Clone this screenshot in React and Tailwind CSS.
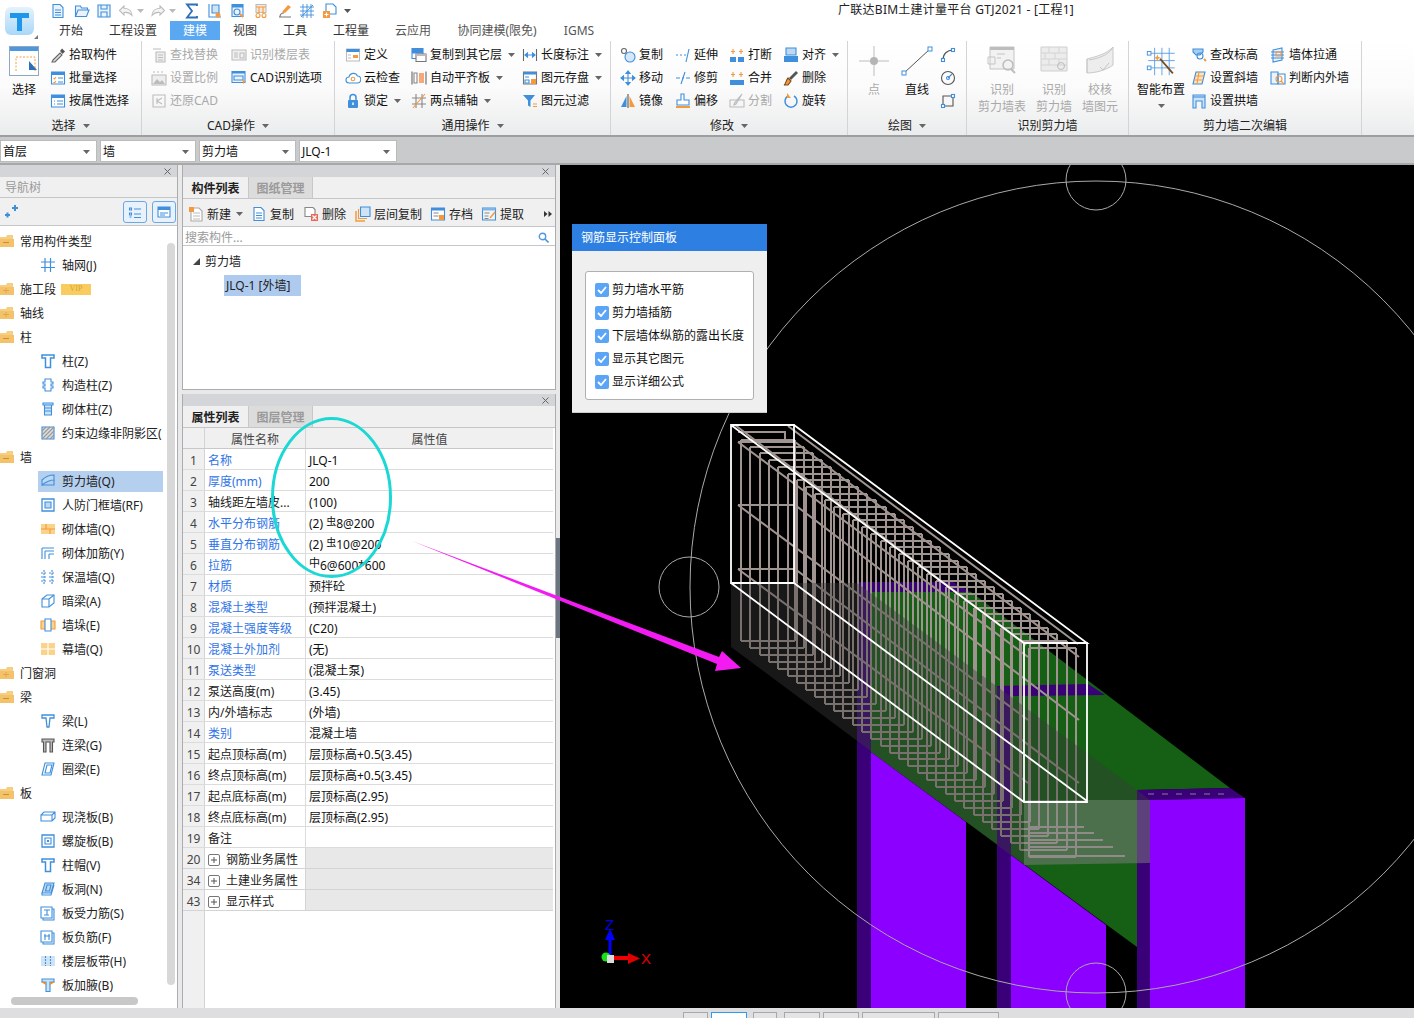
import React from "react";

const B = "#3f8fdc";
const O = "#f59a3c";
const G = "#bcbcbc";

function Svg({ s = 16, children }) {
  return (
    <svg width={s} height={s} viewBox="0 0 16 16" fill="none" className="shrink-0" strokeWidth="1.1">
      {children}
    </svg>
  );
}

const icons = {
  page: <><path d="M3 1.5h7l3 3v10H3z" fill="#eaf3fb" stroke={B} /><path d="M5 7h6M5 9.5h6M5 12h6" stroke={B} /></>,
  folder: <path d="M1.5 13.5V3h5l1 2h6v2M1.5 13.5L4 7h11l-2.5 6.5z" stroke={B} fill="#eaf3fb" />,
  save: <><path d="M2 2h12v12H2z" fill="#eaf3fb" stroke={B} /><path d="M5 2v4h6V2M5 14V9h6v5" stroke={B} /></>,
  undo: <path d="M6 3L1.5 7.5 6 12V9.5c3-.5 6 .5 8 3 0-4-3-7-8-7.2z" stroke={G} fill="#f4f4f4" />,
  redo: <path d="M10 3l4.500 4.500L10 12V9.500c-3-.5-6 .5-8 3 0-4 3-7 8-7.200z" stroke={G} fill="#f4f4f4" />,
  sigma: <path d="M13 3V1.500H3l5 6.500-5 6.500h10V13" stroke="#2d6fb8" strokeWidth="1.800" />,
  qa1: <><path d="M2 1v13h12" stroke={B} /><path d="M5 2h7v8H5z" fill="#cfe3f6" stroke={B} /><circle cx="11" cy="12" r="2.500" fill={O} /></>,
  qa2: <><path d="M2 1.500h11v12H2z" fill="#eaf3fb" stroke={B} /><path d="M2 1.500h11v3H2z" fill={B} /><circle cx="7" cy="9" r="3" stroke={B} /><path d="M10 11l3 3" stroke={O} strokeWidth="2" /></>,
  qa3: <><path d="M3 1.500h10v8H3z" fill="#f3e8de" stroke={G} /><path d="M3 4h10M6 4v6M10 4v6" stroke={O} /><circle cx="5" cy="12.500" r="2" stroke={O} /><circle cx="11" cy="12.500" r="2" stroke={O} /></>,
  qa4: <><path d="M11 2l3 2-6 6-3-1z" fill={O} /><path d="M2 14h12M3 14c0-3 2-4 4-4" stroke="#777" /></>,
  grid: <path d="M4 1v14M8 1v14M12 1v14M1 4h14M1 8h14M1 12h14M2 14L14 2" stroke={B} strokeWidth=".9" />,
  qa5: <><path d="M4 1h7l3 3v7H4z" fill="#fff" stroke={B} /><path d="M1 8h7v7H1z" fill={O} /><path d="M4.500 9.500v4M2.500 11.500h4" stroke="#fff" /></>,
  picker: <><path d="M3 13l7-7 2 2-7 7-3 0z" fill="#ddd" stroke="#666" /><path d="M10 4l2-2.500 3 3L12.500 7z" fill="#555" /></>,
  batch: <><path d="M1.500 2h13v12h-13z" fill="#fff" stroke={B} /><path d="M1.500 2h13v3h-13z" fill={B} /><path d="M3.500 8l1 1 1.500-2M3.500 12l1 1 1.500-2" stroke={O} /><path d="M8 8h5M8 12h5" stroke={B} /></>,
  prop: <><path d="M1.500 2h13v12h-13z" fill="#fff" stroke={B} /><path d="M1.500 2h13v3h-13z" fill={B} /><path d="M4 8h1M4 11h1M7 8h6M7 11h6" stroke={B} /></>,
  find: <><path d="M5 5h9v10H5z" fill="#eee" stroke={G} /><path d="M7 8h5M7 10.500h5M7 13h5M2 2h8" stroke={G} /></>,
  floor: <><path d="M1 3h14v10H1z" fill="#f1f1f1" stroke={G} /><path d="M3 6h4M3 8h4M3 10h4M9 6h4v5H9z" stroke={G} /></>,
  scale: <><path d="M1 5h14v10H1z" fill="#eee" stroke={G} /><path d="M2 14l4-5 3 3 2-2 3 4z" fill={G} /><path d="M2 2h12" stroke={G} strokeDasharray="2 2" /></>,
  restore: <><path d="M2 2h12v12H2z" stroke={G} /><path d="M11 5L6 8l5 3M6 5v6" stroke={G} /></>,
  cad: <><path d="M1 1.500h13v11H1z" fill="#eaf3fb" stroke={B} /><path d="M1 1.500h13v2H1z" fill={B} /><path d="M3 6h9v4H3z" stroke={B} /><path d="M11 9l4 3-2 .5-.5 2z" fill={O} /></>,
  define: <><path d="M1.500 2h13v12h-13z" fill="#fff" stroke={G} /><path d="M1.500 2h13v3h-13z" fill={B} /><path d="M8 8h5v3H8z" fill={O} /><path d="M3 8h3M3 11h3" stroke={G} /></>,
  cloud: <><path d="M4 13a3 3 0 010-6 4.500 4.500 0 018.500-1 3.500 3.500 0 01-.5 7z" fill="#fff" stroke={B} /><circle cx="8" cy="9" r="1.800" stroke={O} /></>,
  lock: <><path d="M5 7V4.500a3 3 0 016 0V7" stroke={B} strokeWidth="1.500" /><rect x="3" y="7" width="10" height="8" rx="1" fill={B} /><path d="M8 9.500v2.500" stroke="#fff" strokeWidth="1.500" /></>,
  copyL: <><path d="M1 1.500h11v5H1z" fill={B} /><path d="M1 1.500h11v10H1z" stroke={B} /><path d="M5 7h10v7.500H5z" fill="#fff" stroke="#777" /><path d="M5 7h10v2H5z" fill="#bbb" /></>,
  align: <><path d="M1 1.500v13M15 1.500v13" stroke="#666" /><path d="M3 3h3v10H3z" fill="#fff" stroke="#888" /><path d="M8 3h5v10H8z" fill="#f8a878" /></>,
  axis: <><path d="M5 1v14M11 1v14M1 5h14M1 11h14" stroke="#888" /><path d="M2 15L14 1" stroke={O} /></>,
  dim: <><path d="M1.500 2v12M14.500 2v12" stroke="#666" /><path d="M3 8h10M3 8l2.500-2v4zM13 8l-2.500-2v4z" stroke={B} fill={B} /></>,
  store: <><path d="M1.500 2h13v12h-13z" fill="#fff" stroke="#777" /><path d="M1.500 2h13v2.500h-13z" fill={B} /><path d="M3 7h4M3 10h4v3H3z" stroke={B} /><path d="M9 9h5v5H9z" fill={O} /></>,
  filter: <><path d="M1 2h12L8.500 7.500V14L6 12.500v-5z" fill={B} /><path d="M11 11h4M11 13.500h4" stroke={O} /></>,
  copy: <><circle cx="4" cy="4" r="2.500" stroke="#666" /><circle cx="10" cy="10" r="5" fill="#d6e8f8" stroke={B} /></>,
  extend: <path d="M1 8h2M5 8h2M9 8h2M14 2l-3 13" stroke={B} />,
  trim: <path d="M1 8h4M7 8h2M11 8h4M10 2L6 14" stroke={B} />,
  breakI: <><path d="M1 10h6v5H1zM9 10h6v5H9z" fill={B} /><path d="M4 2v5M2 4.500h4M12 2v5M10 4.500h4" stroke={O} /></>,
  merge: <><path d="M1 10h14v5H1z" fill={B} /><path d="M4 2v5M2 4.500h4M12 2v5M10 4.500h4" stroke={O} /></>,
  alignT: <><path d="M3 1h10v7H3z" fill="#bcd8f2" stroke={B} /><path d="M1 9h14v6H1z" fill={B} /></>,
  move: <path d="M8 1v14M1 8h14M8 1L6 3.500h4zM8 15l-2-2.500h4zM1 8l2.500-2v4zM15 8l-2.500-2v4z" stroke={B} fill={B} />,
  del: <><path d="M13 1L6 8l2 2 7-7z" fill="#555" /><path d="M5 8l3 3-3 4H1c2-1 2-5 4-7z" fill={O} stroke="#7a4a1a" /></>,
  mirror: <><path d="M8 1v14" stroke="#555" /><path d="M6.500 3v11H1z" fill={B} /><path d="M9.500 3v11H15z" fill={O} /></>,
  offset: <><path d="M6 1h3v6h5v5H2V7h4z" fill="#fff" stroke={B} /><path d="M1 14h14" stroke={O} strokeWidth="2" /></>,
  split: <><path d="M1 7h14v7H1z" stroke={G} /><path d="M13 1L7 11l-2 1 .5-2z" fill="#ddd" stroke={G} /></>,
  rotate: <><path d="M11 3a6 6 0 11-6 0" stroke={B} strokeWidth="1.500" /><path d="M4 0v5h4z" fill={O} /></>,
  arc: <><path d="M3 13C3 7 7 3 13 3" stroke="#555" /><rect x="1.500" y="11.500" width="3" height="3" fill="#fff" stroke={B} /><rect x="11.500" y="1.500" width="3" height="3" fill="#fff" stroke={B} /></>,
  circ: <><circle cx="8" cy="8" r="6.500" stroke="#555" /><circle cx="8" cy="8" r="1.500" stroke={B} /><path d="M8 8l4-4" stroke={B} /></>,
  rect: <><path d="M3 3h10v10H3z" stroke="#555" /><rect x="1.500" y="11.500" width="3" height="3" fill="#fff" stroke={B} /><rect x="11.500" y="1.500" width="3" height="3" fill="#fff" stroke={B} /></>,
  level: <><path d="M2 2h10v3L9 8H5L2 5z" fill="#a9cdf0" stroke={B} /><circle cx="9" cy="9" r="3" stroke={B} /><path d="M13 12l2 2" stroke={O} strokeWidth="2" /></>,
  slope: <><path d="M5 2h9l-3 12H2z" fill="#fbe4c6" stroke={B} /><path d="M4 6h9M3 10h9M8 2L6 14" stroke={O} /></>,
  archI: <><path d="M2 15V2h12v13h-3V8H5v7z" fill="#cfe3f6" stroke={B} /><path d="M2 4h12" stroke={B} /></>,
  pull: <><path d="M3 3l9-2v12l-9 2z" fill="#eaf3fb" stroke={B} /><path d="M1 5h13M1 8h13M1 11h13" stroke={B} /><path d="M6 5h5v4H6z" stroke={O} /></>,
  inout: <><path d="M1 2h7v12H1z" fill="#eaf3fb" stroke={B} /><path d="M8 4h7v10H8z" stroke={B} /><circle cx="9" cy="9" r="3" stroke={O} /><path d="M11 11l3 3" stroke={O} /></>,
  plusS: <path d="M2 11h5M4.500 8.500v5M9 4h6M12 1v6" stroke={B} strokeWidth="2" />,
  newP: <><path d="M3 2h8l3 3v10H3z" fill="#fff" stroke="#aaa" /><path d="M5 7h7M5 10h7M5 13h7" stroke="#bbb" /><path d="M1 1h5v5H1z" fill={O} /></>,
  copyP: <><path d="M3 1.500h7l3 3v10H3z" fill="#fff" stroke={B} /><path d="M5 7h6M5 9.500h6M5 12h6" stroke={B} /></>,
  delP: <><path d="M2 1.500h8l2 2v7H2z" fill="#fff" stroke="#888" /><path d="M8 8h7v7H8z" fill="#e96a5a" /><path d="M9.500 9.500l4 4M13.500 9.500l-4 4" stroke="#fff" /></>,
  layerC: <><path d="M1 5v10h9" stroke={O} strokeWidth="1.500" /><path d="M3.500 3v9.500H12" stroke={O} /><path d="M5.500 1h9.500v9.500H5.500z" fill="#cfe3f6" stroke={B} /></>,
  arch: <><path d="M1.500 2h13v12h-13z" fill="#fff" stroke={B} /><path d="M1.500 2h13v2.500h-13z" fill={B} /><path d="M3.500 7h5M3.500 10h5" stroke="#888" /><path d="M9 9h5v5H9z" fill={O} /></>,
  fetch: <><path d="M1.500 2h13v12h-13z" fill="#f4f4f4" stroke={B} /><path d="M1.500 2h13v2.500h-13z" fill="#7fb4e6" /><path d="M3.500 7h5M3.500 10h4M3.500 12.500h4" stroke="#888" /><path d="M14 6l-5 6" stroke={O} strokeWidth="1.500" /></>,
  gridT: <path d="M5 1v14M10.500 1v14M1 5h14M1 10.500h14" stroke={B} strokeWidth="1.200" />,
  colT: <path d="M2 2h12v3h-3.500v9.500h-5V5H2z" stroke={B} strokeWidth="1.500" />,
  colC: <path d="M5 2h6v3h2v2h-2v2h2v2h-2v3H5v-3H3V9h2V7H3V5h2z" stroke={B} />,
  colB: <><path d="M3 2h10v2H3zM4.500 4h7v10h-7z" fill="#cfe3f6" stroke={B} /><path d="M4.500 7h7M4.500 10h7" stroke={B} /></>,
  hatch: <><path d="M2 2h12v12H2z" fill="#ddd" stroke={B} /><path d="M2 6l4-4M2 10l8-8M2 14L14 2M6 14l8-8M10 14l4-4" stroke="#999" /></>,
  shear: <><path d="M2 12V7c4-4 8-5 12-5v5C10 7 6 9 2 12z" fill="#bcd8f2" stroke={B} /><path d="M2 12h12V7" stroke={B} /></>,
  frame: <><path d="M2 2h12v12H2z" stroke={B} strokeWidth="1.300" /><path d="M5 5h6v6H5z" fill="#bcd8f2" stroke={B} /></>,
  brick: <><path d="M1 3h14v10H1z" fill="#fbd28a" /><path d="M1 8h14M6 3v5M10 8v5" stroke={O} /></>,
  rebarW: <path d="M2 3h12M2 3v11M5 6h9M5 6v8M9 9h5M9 9v5" stroke={B} />,
  insul: <path d="M4 1v14M12 1v14M1 4h6M1 8h6M1 12h6M9 4h6M9 8h6M9 12h6" stroke={B} strokeDasharray="2 1" />,
  dark: <><path d="M2 6l5-4h7v8l-5 4H2z" fill="#fff" stroke={B} /><path d="M2 6h7v8M9 6l5-4" stroke={B} /></>,
  pier: <><path d="M1 4h14v8H1z" fill="#fbd28a" stroke={O} /><path d="M5 2h6v12H5z" fill="#fff" stroke={B} /></>,
  curtain: <><path d="M1 2h14v12H1z" fill="#fbd28a" /><path d="M8 2v12M1 8h14" stroke="#fff" /></>,
  beamT: <path d="M2 2h12v3h-4l-1 9H7L6 5H2z" stroke={B} strokeWidth="1.300" />,
  link: <path d="M2 2h12v3h-1.500v10H10V5H6v10H3.500V5H2z" fill="#bbb" stroke="#555" />,
  ring: <><path d="M5 2h9l-3 12H2z" fill="#fff" stroke={B} /><path d="M7 4h5l-2 8H5z" stroke={B} /></>,
  slab: <path d="M1 6l3-3h11v6l-3 3H1zM1 6h11v6M12 6l3-3" stroke={B} />,
  spiral: <><path d="M2 2h12v12H2z" stroke={B} strokeWidth="1.300" /><path d="M5 5h6v6H5zM7.500 7.500h1v1h-1z" stroke={B} /></>,
  hole: <><path d="M5 2h9l-3 10H2z" fill="#bcd8f2" stroke={B} /><path d="M7 4h4l-1.500 6h-4zM2 12v2h9l3-10" stroke={B} /></>,
  force: <><path d="M3 4h11v11H3z" fill="#eaf3fb" stroke={B} /><path d="M1 2h11v11H1z" fill="#fff" stroke={B} /><path d="M4 5h6M7 5v5M4 10h5" stroke={B} /></>,
  neg: <><path d="M3 4h11v11H3z" fill="#eaf3fb" stroke={B} /><path d="M1 2h11v11H1z" fill="#fff" stroke={B} /><path d="M4 7h6M5 5v6M9 5v6" stroke={B} /></>,
  band: <><path d="M1 3h14v10H1z" fill="#cfe3f6" /><path d="M5.500 3v10M10.500 3v10" stroke={B} strokeDasharray="2 1" /></>,
  haunch: <><path d="M2 2h12v3h-4v9.500H6V5H2z" fill="#cfe3f6" stroke={B} /><path d="M1 5h4.500L6 8zM15 5h-4.500L10 8z" fill="#f08a24" /></>,
  list: <path d="M2.500 4h2v2h-2zM2.500 9h2v2h-2zM7 5h7M7 10h7M2.500 13h2M7 13.500h7" stroke={B} />,
  panel: <><path d="M2 3h12v10H2z" stroke={B} fill="#fff" /><path d="M2 3h12v3H2z" fill={B} /><path d="M4 9h8M4 11h5" stroke={B} /></>,
};

function Caret({ c = "#666" }) {
  return (
    <svg width="7" height="4" viewBox="0 0 7 4" className="shrink-0">
      <path d="M0 0h7L3.500 4z" fill={c} />
    </svg>
  );
}

function Qa({ name, className = "" }) {
  return (
    <span className={"flex items-center gap-[3px] " + className}>
      <Svg>{icons[name]}</Svg>
    </span>
  );
}

function Item({ icon, label, off, caret }) {
  return (
    <div className={"flex h-[23px] items-center gap-[3px] whitespace-nowrap " + (off ? "text-[#a9a9a9]" : "text-[#111]")}>
      <Svg>{icons[icon]}</Svg>
      <span>{label}</span>
      {caret && <span className="ml-[3px]"><Caret /></span>}
    </div>
  );
}

function Group({ className, label, caret, children }) {
  return (
    <div className={"flex h-[94px] shrink-0 flex-col border-r border-[#d2d4d6] " + className}>
      <div className="flex h-[75px] pt-[2px]">{children}</div>
      <div className="flex h-[19px] items-center justify-center gap-[7px] text-[#222]">
        <span>{label}</span>
        {caret && <Caret />}
      </div>
    </div>
  );
}

function Large({ className, label, off, icon }) {
  return (
    <div className={"flex flex-col items-center text-center leading-[17px] " + (off ? "text-[#a9a9a9] " : "text-[#111] ") + className}>
      <div className="flex h-[38px] items-start pt-[3px]">{icon}</div>
      <div className="whitespace-pre">{label}</div>
    </div>
  );
}

const BigSelect = (
  <svg width="30" height="30" viewBox="0 0 30 30">
    <rect x=".5" y=".5" width="29" height="29" fill="#fff" stroke="#8fa9c4" />
    <rect x="1" y="1" width="28" height="4" fill="#4f97dd" />
    <path d="M7 25V11h19v14" fill="none" stroke="#f2a23c" strokeDasharray="2 1.500" />
    <path d="M20 15l8 9h-8z" fill="#2d6fb8" />
  </svg>
);
const BigPoint = (
  <svg width="30" height="30" viewBox="0 0 30 30">
    <path d="M15 0v30M0 15h30" stroke="#bdbdbd" />
    <circle cx="15" cy="15" r="4" fill="#b5b5b5" />
  </svg>
);
const BigLine = (
  <svg width="32" height="30" viewBox="0 0 32 30">
    <path d="M3 27L29 3" stroke="#555" />
    <rect x="1" y="25" width="4" height="4" fill="#fff" stroke="#3f8fdc" />
    <rect x="27" y="1" width="4" height="4" fill="#fff" stroke="#3f8fdc" />
  </svg>
);
const BigWallTable = (
  <svg width="30" height="28" viewBox="0 0 30 28" fill="none">
    <path d="M3 1h24v22H3z" fill="#f2f2f2" stroke="#c4c4c4" />
    <path d="M3 1h24v3H3z" fill="#bdbdbd" />
    <path d="M1 11h7v7H1zM10 8h8M10 12h4" stroke="#c4c4c4" />
    <circle cx="21" cy="19" r="5" stroke="#bdbdbd" strokeWidth="1.500" />
    <path d="M24 23l4 4" stroke="#bdbdbd" strokeWidth="2" />
  </svg>
);
const BigWall = (
  <svg width="30" height="28" viewBox="0 0 30 28" fill="none">
    <path d="M2 1h26v24H2z" fill="#ececec" stroke="#cfcfcf" />
    <path d="M2 7h26M2 13h26M2 19h26M10 1v6M20 1v6M6 7v6M16 7v6M10 13v6M20 13v6" stroke="#d4d4d4" />
    <circle cx="22" cy="20" r="3.500" stroke="#bbb" />
  </svg>
);
const BigCheck = (
  <svg width="30" height="28" viewBox="0 0 30 28" fill="none">
    <path d="M2 13C10 11 22 8 28 1v18C22 24 10 27 2 27z" fill="#ededed" stroke="#c8c8c8" />
    <path d="M2 13v14M28 1C26 6 18 12 4 14" stroke="#c8c8c8" />
    <path d="M15 21l3 3 6-7" stroke="#c4c4c4" />
  </svg>
);
const BigSmart = (
  <svg width="32" height="31" viewBox="0 0 34 34" fill="none">
    <path d="M10 2v30M18 2v30M26 2v30M3 8h29M3 16h29M3 24h29" stroke="#5a9fe0" />
    <rect x="2" y="6" width="4" height="4" fill="#fff" stroke="#3f8fdc" />
    <rect x="2" y="22" width="4" height="4" fill="#fff" stroke="#3f8fdc" />
    <path d="M16 14l14 16" stroke="#7a4a1a" strokeWidth="2" />
    <path d="M13 9l1 3 3 1-3 1-1 3-1-3-3-1 3-1z" fill="#f59a3c" />
  </svg>
);

function Ribbon() {
  return (
    <div className="flex h-[97px] border-b-[2px] border-[#9c9ea0] bg-gradient-to-b from-[#ffffff] via-[#fbfbfb] to-[#ebeced] pt-[1px]">
      <Group className="w-[142px]" label="选择" caret>
        <div className="ml-[8px]"><Large className="w-[32px]" label="选择" icon={BigSelect} /></div>
        <div className="ml-[10px]">
          <Item icon="picker" label="拾取构件" />
          <Item icon="batch" label="批量选择" />
          <Item icon="prop" label="按属性选择" />
        </div>
      </Group>
      <Group className="w-[193px]" label="CAD操作" caret>
        <div className="ml-[9px] w-[80px]">
          <Item icon="find" label="查找替换" off />
          <Item icon="scale" label="设置比例" off />
          <Item icon="restore" label="还原CAD" off />
        </div>
        <div>
          <Item icon="floor" label="识别楼层表" off />
          <Item icon="cad" label="CAD识别选项" />
        </div>
      </Group>
      <Group className="w-[276px]" label="通用操作" caret>
        <div className="ml-[10px] w-[66px]">
          <Item icon="define" label="定义" />
          <Item icon="cloud" label="云检查" />
          <Item icon="lock" label="锁定" caret />
        </div>
        <div className="w-[111px]">
          <Item icon="copyL" label="复制到其它层" caret />
          <Item icon="align" label="自动平齐板" caret />
          <Item icon="axis" label="两点辅轴" caret />
        </div>
        <div>
          <Item icon="dim" label="长度标注" caret />
          <Item icon="store" label="图元存盘" caret />
          <Item icon="filter" label="图元过滤" />
        </div>
      </Group>
      <Group className="w-[237px]" label="修改" caret>
        <div className="ml-[9px] w-[55px]">
          <Item icon="copy" label="复制" />
          <Item icon="move" label="移动" />
          <Item icon="mirror" label="镜像" />
        </div>
        <div className="w-[54px]">
          <Item icon="extend" label="延伸" />
          <Item icon="trim" label="修剪" />
          <Item icon="offset" label="偏移" />
        </div>
        <div className="w-[54px]">
          <Item icon="breakI" label="打断" />
          <Item icon="merge" label="合并" />
          <Item icon="split" label="分割" off />
        </div>
        <div>
          <Item icon="alignT" label="对齐" caret />
          <Item icon="del" label="删除" />
          <Item icon="rotate" label="旋转" />
        </div>
      </Group>
      <Group className="w-[119px]" label="绘图" caret>
        <div className="ml-[11px]"><Large className="w-[30px]" label="点" off icon={BigPoint} /></div>
        <div className="ml-[11px]"><Large className="w-[34px]" label="直线" icon={BigLine} /></div>
        <div className="ml-[6px]">
          <Item icon="arc" label="" />
          <Item icon="circ" label="" />
          <Item icon="rect" label="" />
        </div>
      </Group>
      <Group className="w-[162px]" label="识别剪力墙">
        <div className="ml-[11px]"><Large className="w-[48px]" label={"识别\n剪力墙表"} off icon={BigWallTable} /></div>
        <div className="ml-[10px]"><Large className="w-[36px]" label={"识别\n剪力墙"} off icon={BigWall} /></div>
        <div className="ml-[10px]"><Large className="w-[36px]" label={"校核\n墙图元"} off icon={BigCheck} /></div>
      </Group>
      <Group className="w-[233px]" label="剪力墙二次编辑">
        <div className="ml-[7px]">
          <Large className="w-[50px]" label="智能布置" icon={BigSmart} />
          <div className="mt-[6px] flex justify-center"><Caret /></div>
        </div>
        <div className="ml-[5px] w-[79px]">
          <Item icon="level" label="查改标高" />
          <Item icon="slope" label="设置斜墙" />
          <Item icon="archI" label="设置拱墙" />
        </div>
        <div>
          <Item icon="pull" label="墙体拉通" />
          <Item icon="inout" label="判断内外墙" />
        </div>
      </Group>
    </div>
  );
}

function Combo({ className, label }) {
  return (
    <div className={"flex h-[22px] items-center justify-between border border-[#bbb] bg-white pl-[2px] pr-[6px] pt-[2px] text-[#111] " + className}>
      <span>{label}</span>
      <Caret />
    </div>
  );
}

const tree = [
  ["f", "folderO", "常用构件类型"],
  ["c", "gridT", "轴网(J)"],
  ["f", "folderC", "施工段", "vip"],
  ["f", "folderC", "轴线"],
  ["f", "folderO", "柱"],
  ["c", "colT", "柱(Z)"],
  ["c", "colC", "构造柱(Z)"],
  ["c", "colB", "砌体柱(Z)"],
  ["c", "hatch", "约束边缘非阴影区("],
  ["f", "folderO", "墙"],
  ["c", "shear", "剪力墙(Q)", "sel"],
  ["c", "frame", "人防门框墙(RF)"],
  ["c", "brick", "砌体墙(Q)"],
  ["c", "rebarW", "砌体加筋(Y)"],
  ["c", "insul", "保温墙(Q)"],
  ["c", "dark", "暗梁(A)"],
  ["c", "pier", "墙垛(E)"],
  ["c", "curtain", "幕墙(Q)"],
  ["f", "folderC", "门窗洞"],
  ["f", "folderO", "梁"],
  ["c", "beamT", "梁(L)"],
  ["c", "link", "连梁(G)"],
  ["c", "ring", "圈梁(E)"],
  ["f", "folderO", "板"],
  ["c", "slab", "现浇板(B)"],
  ["c", "spiral", "螺旋板(B)"],
  ["c", "colT", "柱帽(V)"],
  ["c", "hole", "板洞(N)"],
  ["c", "force", "板受力筋(S)"],
  ["c", "neg", "板负筋(F)"],
  ["c", "band", "楼层板带(H)"],
  ["c", "haunch", "板加腋(B)"],
];

function FolderIcon({ open }) {
  return (
    <svg width="15" height="14" viewBox="0 0 15 14" className="shrink-0">
      <path d="M0 3h6l1-2h6v11H0z" fill="#f6cf82" />
      <path d="M0 5h14v8H0z" fill="#f3c26b" />
      {open ? <path d="M3 8.500h6" stroke="#c98f2e" /> : <path d="M3 8.500h6M6 6v5" stroke="#e0a848" />}
    </svg>
  );
}

function TreeRow({ row }) {
  const [kind, icon, label, extra] = row;
  if (kind === "f") {
    return (
      <div className="flex h-[24px] items-center whitespace-nowrap text-[#222]">
        <FolderIcon open={icon === "folderO"} />
        <span className="ml-[5px] pt-[2px]">{label}</span>
        {extra === "vip" && (
          <span className="ml-[5px] flex h-[11px] w-[30px] items-center justify-center bg-[#f8cc5f] font-['Liberation_Serif',serif] text-[8px] text-[#d9a43a]">VIP</span>
        )}
      </div>
    );
  }
  return (
    <div className="flex h-[24px] items-center pl-[38px]">
      <div className={"flex h-[21px] w-[125px] items-center overflow-hidden whitespace-nowrap pl-[2px] text-[#222] " + (extra === "sel" ? "bg-[#b5cfee]" : "")}>
        <Svg>{icons[icon]}</Svg>
        <span className="ml-[6px] pt-[2px]">{label}</span>
      </div>
    </div>
  );
}

function CloseStrip() {
  return (
    <div className="flex h-[12px] items-center justify-end bg-[#d3d5d9] pr-[6px] text-[10px] leading-none text-[#555]">
      <svg width="7" height="7" viewBox="0 0 7 7"><path d="M.5.5l6 6M6.500.5l-6 6" stroke="#666" /></svg>
    </div>
  );
}

function LeftPanel() {
  return (
    <div className="relative flex h-full w-[178px] shrink-0 flex-col border-r border-[#aaacb0] bg-white">
      <CloseStrip />
      <div className="flex h-[21px] items-center border-b border-[#c4c6c8] bg-[#f0f0f0] pl-[5px] pt-[2px] text-[#9a9a9a]">导航树</div>
      <div className="flex h-[28px] items-center justify-between border-b border-[#c4c6c8] bg-[#f0f0f0] pl-[3px] pr-[1px]">
        <Svg>{icons.plusS}</Svg>
        <div className="flex gap-[5px]">
          <div className="flex h-[22px] w-[24px] items-center justify-center rounded-[3px] border border-[#6aa9e8] bg-[#e8f2fc]"><Svg>{icons.list}</Svg></div>
          <div className="flex h-[22px] w-[24px] items-center justify-center rounded-[3px] border border-[#6aa9e8] bg-[#e8f2fc]"><Svg>{icons.panel}</Svg></div>
        </div>
      </div>
      <div className="pt-[3px] text-[12px]">
        {tree.map((r) => <TreeRow key={r[2] + r[1]} row={r} />)}
      </div>
      <div className="absolute left-[167px] top-[78px] h-[742px] w-[8px] rounded-full bg-[#d8d8d8]" />
      <div className="absolute left-[11px] top-[832px] h-[8px] w-[127px] rounded-full bg-[#c8c8c8]" />
    </div>
  );
}

function Tabs({ a, b }) {
  return (
    <div className="flex h-[22px] items-stretch border-b border-[#c4c6c8] bg-[#f0f0f0] pt-[2px]">
      <div className="flex w-[65px] items-center justify-center font-bold text-[#222]">{a}</div>
      <div className="-mt-[2px] flex w-[65px] items-center justify-center border-x border-[#c8c8c8] bg-[#dcdcdc] pt-[2px] font-bold text-[#9a9a9a]">{b}</div>
    </div>
  );
}

function ToolBtn({ icon, label, caret, className }) {
  return (
    <div className={"flex items-center gap-[3px] text-[#222] " + className}>
      <Svg>{icons[icon]}</Svg>
      <span className="whitespace-nowrap pt-[2px]">{label}</span>
      {caret && <span className="ml-[2px]"><Caret /></span>}
    </div>
  );
}

const R1 = <span className="relative top-[-3px] text-[10px]">虫</span>;
const R2 = <span className="relative top-[-3px] text-[11px]">中</span>;

const rows = [
  ["1", "名称", "JLQ-1", 1],
  ["2", "厚度(mm)", "200", 1],
  ["3", "轴线距左墙皮...", "(100)", 0],
  ["4", "水平分布钢筋", <>(2) {R1}8@200</>, 1],
  ["5", "垂直分布钢筋", <>(2) {R1}10@200</>, 1],
  ["6", "拉筋", <>{R2}6@600*600</>, 1],
  ["7", "材质", "预拌砼", 1],
  ["8", "混凝土类型", "(预拌混凝土)", 1],
  ["9", "混凝土强度等级", "(C20)", 1],
  ["10", "混凝土外加剂", "(无)", 1],
  ["11", "泵送类型", "(混凝土泵)", 1],
  ["12", "泵送高度(m)", "(3.45)", 0],
  ["13", "内/外墙标志", "(外墙)", 0],
  ["14", "类别", "混凝土墙", 1],
  ["15", "起点顶标高(m)", "层顶标高+0.5(3.45)", 0],
  ["16", "终点顶标高(m)", "层顶标高+0.5(3.45)", 0],
  ["17", "起点底标高(m)", "层顶标高(2.95)", 0],
  ["18", "终点底标高(m)", "层顶标高(2.95)", 0],
  ["19", "备注", "", 0],
];
const groupRows = [["20", "钢筋业务属性"], ["34", "土建业务属性"], ["43", "显示样式"]];

function Idx({ children }) {
  return <div className="flex w-[22px] shrink-0 items-center justify-center border-r border-[#d4d4d4] bg-[#f0f0f0] pt-[3px] text-[#444]">{children}</div>;
}

function PropTable() {
  return (
    <div className="relative flex-1 bg-white">
      <div className="absolute bottom-0 left-0 top-0 w-[22px] border-r border-[#d4d4d4] bg-[#f0f0f0]" />
      <div className="relative w-[370px] text-[12px]">
        <div className="flex h-[21px] border-b border-[#c8c8c8] bg-[#f0f0f0] text-[#444]">
          <Idx />
          <div className="flex w-[101px] items-center justify-center border-r border-[#d4d4d4] pt-[3px]">属性名称</div>
          <div className="flex flex-1 items-center justify-center pt-[3px]">属性值</div>
        </div>
        {rows.map(([n, name, val, link]) => (
          <div key={n} className="flex h-[21px] border-b border-[#dcdcdc]">
            <Idx>{n}</Idx>
            <div className={"flex w-[101px] items-center overflow-hidden whitespace-nowrap border-r border-[#dcdcdc] pl-[3px] pt-[3px] " + (link ? "text-[#2f74e6]" : "text-[#222]")}>{name}</div>
            <div className="flex flex-1 items-center whitespace-pre pl-[3px] pt-[3px] text-[#111]"><span>{val}</span></div>
          </div>
        ))}
        {groupRows.map(([n, name]) => (
          <div key={n} className="flex h-[21px] border-b border-[#d4d4d4]">
            <Idx>{n}</Idx>
            <div className="flex w-[101px] items-center gap-[6px] whitespace-nowrap border-r border-[#d4d4d4] pl-[3px] pt-[3px] text-[#222]">
              <span className="flex h-[12px] w-[12px] items-center justify-center rounded-[2px] border border-[#777]">
                <svg width="6" height="6" viewBox="0 0 6 6"><path d="M3 0v6M0 3h6" stroke="#555" /></svg>
              </span>
              {name}
            </div>
            <div className="flex-1 bg-[#e8e8e8]" />
          </div>
        ))}
      </div>
    </div>
  );
}

function MiddlePanel() {
  return (
    <div className="flex h-full w-[374px] shrink-0 flex-col">
      <div className="flex h-[225px] flex-col border-x border-b border-[#aaacb0] bg-white">
        <CloseStrip />
        <Tabs a="构件列表" b="图纸管理" />
        <div className="flex h-[28px] items-center justify-between border-b border-[#c4c6c8] bg-[#f0f0f0] pl-[5px] pr-[3px] pt-[2px]">
          <div className="flex items-center">
            <ToolBtn icon="newP" label="新建" caret className="w-[63px]" />
            <ToolBtn icon="copyP" label="复制" className="w-[52px]" />
            <ToolBtn icon="delP" label="删除" className="w-[52px]" />
            <ToolBtn icon="layerC" label="层间复制" className="w-[75px]" />
            <ToolBtn icon="arch" label="存档" className="w-[51px]" />
            <ToolBtn icon="fetch" label="提取" />
          </div>
          <svg width="8" height="8" viewBox="0 0 8 8"><path d="M0 1l3.500 3L0 7zM4.500 1L8 4 4.500 7z" fill="#333" /></svg>
        </div>
        <div className="flex h-[19px] items-center justify-between border-b border-[#c4c6c8] pl-[2px] pr-[6px] pt-[3px] text-[#9a9a9a]">
          <span>搜索构件...</span>
          <svg width="11" height="11" viewBox="0 0 11 11" fill="none"><circle cx="4.500" cy="4.500" r="3.200" stroke="#4f97dd" strokeWidth="1.400" /><path d="M7 7l3.500 3.500" stroke="#4f97dd" strokeWidth="1.600" /></svg>
        </div>
        <div className="pl-[10px] pt-[5px] text-[#222]">
          <div className="flex h-[21px] items-center gap-[5px]">
            <svg width="7" height="7" viewBox="0 0 7 7"><path d="M7 0v7H0z" fill="#444" /></svg>
            <span>剪力墙</span>
          </div>
          <div className="mt-[3px] ml-[31px] flex h-[21px] w-[77px] items-center bg-[#aecaee] pl-[2px]">JLQ-1 [外墙]</div>
        </div>
      </div>
      <div className="h-[4px]" />
      <div className="flex flex-1 flex-col border-x border-[#aaacb0]">
        <CloseStrip />
        <Tabs a="属性列表" b="图层管理" />
        <PropTable />
      </div>
    </div>
  );
}

// wall rebar cage, generated along the wall's long edge
function Rebar() {
  const bars = [];
  for (let i = 0; i < 32; i++) {
    const x = Math.round(741 + i * 9.3);
    const xr = Math.round(795 + i * 9.05);
    const yt = Math.round(440 + i * 6.7);
    const yb = Math.round(641 + i * 6.97);
    bars.push(`M${x} ${yt}V${yb}`);
    bars.push(`M${xr} ${yt}V${yb}`);
    bars.push(`M${x} ${yt}H${xr}`);
    bars.push(`M${x} ${yb}H${xr}`);
  }
  return (
    <g stroke="#a09490" strokeWidth="2" fill="none">
      <path d={bars.join("")} />
      <path d="M738 442H795L1079 657M738 442L1028 657M738 505H795L1079 720M738 505L1028 720M738 569H795L1079 783M738 569L1028 783" />
      <path d="M735 425L1026 645M788 426L1078 644M738 432H785V440" />
      <path d="M1030 827H1084M1030 833H1094M1030 840H1103M1030 847H1113M1030 856H1125" />
    </g>
  );
}

function Scene() {
  return (
    <svg viewBox="560 165 854 844" width="854" height="844" className="block">
      <rect x="560" y="165" width="854" height="844" fill="#000" />
      {/* beam top and columns */}
      <polygon points="871,592 971,592 1230,788 1137,790 1137,947 871,752" fill="#156015" />
      <polygon points="857,582 953,582 971,592 871,592" fill="#3a0078" />
      <polygon points="997,686 1088,684 1105,695 1011,696" fill="#3a0078" />
      <polygon points="1137,790 1230,788 1245,798 1150,800" fill="#3a0078" />
      <polygon points="871,752 966,822 966,1009 871,1009" fill="#8b00ff" />
      <polygon points="1011,855 1106,925 1106,1009 1011,1009" fill="#8b00ff" />
      <polygon points="1150,800 1245,798 1245,1009 1150,1009" fill="#8b00ff" />
      <rect x="857" y="582" width="14" height="427" fill="#3a0078" />
      <rect x="997" y="686" width="14" height="323" fill="#3a0078" />
      <rect x="1137" y="790" width="13" height="219" fill="#3a0078" />
      <path d="M1148 794H1232" stroke="#8a7aa0" strokeDasharray="6 8" />
      {/* grid circles */}
      <g fill="none" stroke="#aaa">
        <circle cx="1096" cy="587" r="406" />
        <circle cx="1096" cy="180" r="30" />
        <circle cx="1096" cy="993" r="30" />
        <circle cx="689" cy="587" r="30" />
      </g>
      <Rebar />
      {/* ghost of the wall's shadow */}
      <polygon points="731,583 857,583 1137,790 1150,800 1150,863 1024,865 731,647" fill="#3c3c3c" fillOpacity=".4" />
      <polygon points="1024,800 1150,800 1150,863 1024,865" fill="#fff" fillOpacity=".18" />
      {/* wall box */}
      <g stroke="#fff" strokeWidth="1.800" fill="none">
        <path d="M731 425H794V583H731ZM731 425L1024 643H1087L794 425M731 583L1024 802H1087V642M1024 643V802M794 583L1087 801" />
      </g>
      {/* axes */}
      <path d="M610 957V938" stroke="#0000ff" strokeWidth="3" />
      <path d="M610 929l5 11h-10z" fill="#0000ff" />
      <path d="M612 958H628" stroke="#f00000" strokeWidth="4" />
      <path d="M640 958.500l-12 5.500v-11z" fill="#e00000" />
      <circle cx="606" cy="957" r="4.500" fill="#19e019" />
      <rect x="607" y="955" width="7" height="8" fill="#dcdcdc" />
      <text x="605" y="930" fontSize="15" fill="#0000e0" fontFamily="Liberation Sans">Z</text>
      <text x="641" y="964" fontSize="15" fill="#e00000" fontFamily="Liberation Sans">X</text>
    </svg>
  );
}

function RebarPanel() {
  const opts = ["剪力墙水平筋", "剪力墙插筋", "下层墙体纵筋的露出长度", "显示其它图元", "显示详细公式"];
  return (
    <div className="absolute left-[12px] top-[59px] w-[195px] border-b border-[#c8ccd0] bg-[#efefef]">
      <div className="flex h-[27px] items-center bg-[#2d7fe2] pl-[9px] text-white">钢筋显示控制面板</div>
      <div className="px-[13px] pb-[12px] pt-[20px]">
        <div className="rounded-[3px] border border-[#b0b0b0] bg-white py-[6px] pl-[9px] pr-[8px]">
          {opts.map((o) => (
            <div key={o} className="flex h-[23px] items-center gap-[3px] whitespace-nowrap text-[#111]">
              <span className="flex h-[14px] w-[14px] items-center justify-center rounded-[2px] bg-[#5aa5f5]">
                <svg width="10" height="8" viewBox="0 0 10 8" fill="none"><path d="M1 4l3 3 5-6" stroke="#fff" strokeWidth="1.800" /></svg>
              </span>
              {o}
            </div>
          ))}
        </div>
      </div>
    </div>
  );
}

function StatusBtn({ className }) {
  return <div className={"h-[6px] border border-b-0 border-[#a8a8a8] bg-[#e4e4e4] " + className} />;
}

export default function App() {
  return (
    <div className="relative h-[1018px] w-[1414px] overflow-hidden bg-[#e9e9ea] font-['Noto_Sans','Noto_Sans_CJK_SC',sans-serif] text-[12px] leading-none">
      {/* title + tabs */}
      <div className="flex h-[40px] bg-white">
        <div className="relative w-[45px] shrink-0 pl-[5px] pt-[7px]">
          <svg width="29" height="28" viewBox="0 0 29 28">
            <defs>
              <linearGradient id="lg" x1="0" y1="0" x2="0" y2="1">
                <stop offset="0" stopColor="#e4f2fd" />
                <stop offset="1" stopColor="#a9d8f8" />
              </linearGradient>
            </defs>
            <rect width="29" height="28" rx="6" fill="url(#lg)" />
            <path d="M5 6h19v5h-7v13h-5V11H5z" fill="#1f96ec" />
          </svg>
          <svg width="4" height="4" viewBox="0 0 4 4" className="absolute left-[34px] top-[35px]"><path d="M4 0v4H0z" fill="#777" /></svg>
        </div>
        <div className="flex min-w-0 flex-1 flex-col">
          <div className="flex h-[21px] items-center">
            <Qa name="page" className="ml-[5px]" />
            <Qa name="folder" className="ml-[8px]" />
            <Qa name="save" className="ml-[6px]" />
            <Qa name="undo" className="ml-[6px]" />
            <span className="ml-[3px]"><Caret c="#bbb" /></span>
            <Qa name="redo" className="ml-[6px]" />
            <span className="ml-[3px]"><Caret c="#bbb" /></span>
            <Qa name="sigma" className="ml-[8px]" />
            <Qa name="qa1" className="ml-[7px]" />
            <Qa name="qa2" className="ml-[7px]" />
            <Qa name="qa3" className="ml-[7px]" />
            <Qa name="qa4" className="ml-[8px]" />
            <Qa name="grid" className="ml-[6px]" />
            <Qa name="qa5" className="ml-[7px]" />
            <span className="ml-[6px]"><Caret c="#555" /></span>
            <span className="ml-auto mr-[340px] -translate-y-[1px] whitespace-nowrap tracking-[0.25px] text-[#222]">广联达BIM土建计量平台 GTJ2021 - [工程1]</span>
          </div>
          <div className="flex h-[19px] items-center text-center text-[#333]">
            <div className="w-[52px]">开始</div>
            <div className="w-[72px]">工程设置</div>
            <div className="ml-[1px] flex h-full w-[50px] items-center justify-center bg-[#5aa7f2] text-white">建模</div>
            <div className="w-[50px]">视图</div>
            <div className="w-[50px]">工具</div>
            <div className="w-[62px]">工程量</div>
            <div className="w-[62px] text-[#555]">云应用</div>
            <div className="w-[106px] text-[#555]">协同建模(限免)</div>
            <div className="w-[58px] text-[#555]">IGMS</div>
          </div>
        </div>
      </div>
      <Ribbon />
      {/* combo bar */}
      <div className="flex h-[28px] items-start gap-[3px] border-b-[2px] border-[#a6a8aa] bg-[#c8cacc] pt-[3px]">
        <Combo className="w-[97px]" label="首层" />
        <Combo className="w-[96px]" label="墙" />
        <Combo className="w-[97px]" label="剪力墙" />
        <Combo className="w-[98px]" label="JLQ-1" />
      </div>
      {/* main area */}
      <div className="flex h-[843px]">
        <LeftPanel />
        <div className="w-[4px] shrink-0" />
        <MiddlePanel />
        <div className="relative w-[4px] shrink-0">
          <div className="absolute left-0 top-[373px] h-[100px] w-[4px] bg-[#6b7680]" />
        </div>
        <div className="relative flex-1 overflow-hidden">
          <Scene />
          <RebarPanel />
        </div>
      </div>
      {/* status bar */}
      <div className="flex h-[10px] items-end bg-[#dedee0] pl-[683px]">
        <StatusBtn className="w-[25px]" />
        <div className="ml-[3px] h-[6px] w-[36px] border border-b-0 border-[#2f9bf0] bg-white" />
        <StatusBtn className="ml-[6px] w-[24px]" />
        <StatusBtn className="ml-[7px] w-[36px]" />
        <StatusBtn className="ml-[3px] w-[36px]" />
        <StatusBtn className="ml-[3px] w-[73px]" />
        <StatusBtn className="ml-[3px] w-[61px]" />
      </div>
      {/* hand drawn marks on top of the screenshot */}
      <svg width="1414" height="1018" className="pointer-events-none absolute left-0 top-0">
        <ellipse cx="331.500" cy="497.500" rx="59" ry="79" fill="none" stroke="#1cd8d4" strokeWidth="3" />
        <polygon points="412,541 719,657 722,651 741,668 715,671 717,664" fill="#f21cf2" />
      </svg>
    </div>
  );
}
